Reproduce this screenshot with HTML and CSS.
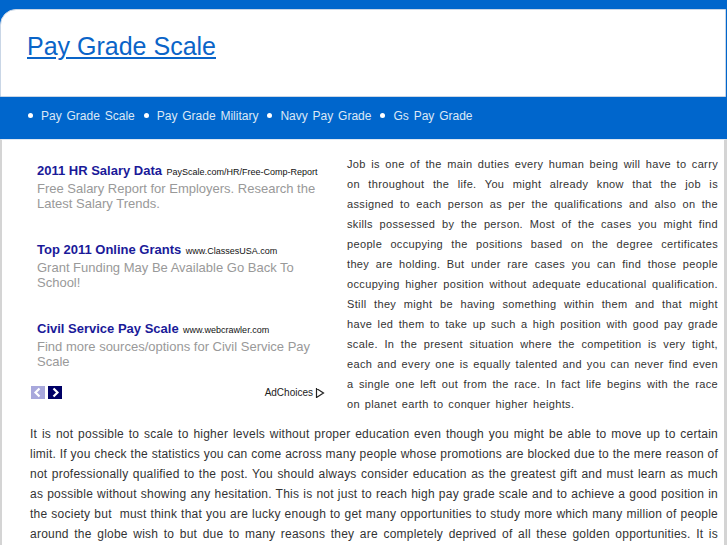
FILE: index.html
```html
<!DOCTYPE html>
<html>
<head>
<meta charset="utf-8">
<title>Pay Grade Scale</title>
<link rel="stylesheet" href="styles.css">
</head>
<body>
<div class="page">
  <div class="header">
    <a class="site-title" href="#">Pay Grade Scale</a>
  </div>
  <div class="nav">
    <a class="nav-item" href="#">Pay Grade Scale</a>
    <a class="nav-item" href="#">Pay Grade Military</a>
    <a class="nav-item" href="#">Navy Pay Grade</a>
    <a class="nav-item" href="#">Gs Pay Grade</a>
  </div>
  <div class="content">
    <div class="top">
      <div class="ads">
        <div class="ad">
          <div class="ad-head"><a class="ad-title" href="#">2011 HR Salary Data</a> <span class="ad-url">PayScale.com/HR/Free-Comp-Report</span></div>
          <div class="ad-desc">Free Salary Report for Employers. Research the Latest Salary Trends.</div>
        </div>
        <div class="ad">
          <div class="ad-head"><a class="ad-title" href="#">Top 2011 Online Grants</a> <span class="ad-url">www.ClassesUSA.com</span></div>
          <div class="ad-desc">Grant Funding May Be Available Go Back To School!</div>
        </div>
        <div class="ad">
          <div class="ad-head"><a class="ad-title" href="#">Civil Service Pay Scale</a> <span class="ad-url">www.webcrawler.com</span></div>
          <div class="ad-desc">Find more sources/options for Civil Service Pay Scale</div>
        </div>
        <div class="ad-foot">
          <div class="arrows">
            <span class="arrow prev"><svg width="14" height="13" viewBox="0 0 14 13"><path d="M8.5 2.5 L4.5 6.5 L8.5 10.5" fill="none" stroke="#fff" stroke-width="2.2"/></svg></span>
            <span class="arrow next"><svg width="14" height="13" viewBox="0 0 14 13"><path d="M5.5 2.5 L9.5 6.5 L5.5 10.5" fill="none" stroke="#fff" stroke-width="2.2"/></svg></span>
          </div>
          <span class="adchoices">AdChoices <svg width="10" height="12" viewBox="0 0 10 12"><path d="M1.5 1 L1.5 11 M1.5 1.5 L8.5 6 L1.5 10.5" fill="none" stroke="#222" stroke-width="1.2"/></svg></span>
        </div>
      </div>
      <p class="intro">Job is one of the main duties every human being will have to carry on throughout the life. You might already know that the job is assigned to each person as per the qualifications and also on the skills possessed by the person. Most of the cases you might find people occupying the positions based on the degree certificates they are holding. But under rare cases you can find those people occupying higher position without adequate educational qualification. Still they might be having something within them and that might have led them to take up such a high position with good pay grade scale. In the present situation where the competition is very tight, each and every one is equally talented and you can never find even a single one left out from the race. In fact life begins with the race on planet earth to conquer higher heights.</p>
    </div>
    <p class="body-text">It is not possible to scale to higher levels without proper education even though you might be able to move up to certain limit. If you check the statistics you can come across many people whose promotions are blocked due to the mere reason of not professionally qualified to the post. You should always consider education as the greatest gift and must learn as much as possible without showing any hesitation. This is not just to reach high pay grade scale and to achieve a good position in the society but &nbsp;must think that you are lucky enough to get many opportunities to study more which many million of people around the globe wish to but due to many reasons they are completely deprived of all these golden opportunities. It is important to remember that education is the key to success and that it opens many doors for you in the future.</p>
  </div>
</div>
</body>
</html>
```

FILE: styles.css
```css
html, body {
  margin: 0;
  padding: 0;
  background: #0066cc;
}
body {
  font-family: "Liberation Sans", Arial, sans-serif;
  overflow: hidden;
}
.page {
  padding-top: 9px;
  background: #0066cc;
}
.header {
  background: #fff;
  height: 86px;
  margin-right: 1px;
  border: 1px solid #c9d6e6;
  border-top-left-radius: 16px;
  padding: 0 0 0 26px;
}
.site-title {
  display: inline-block;
  margin-top: 22px;
  font-size: 25px;
  color: #0a64c8;
  text-decoration: underline;
}
.nav {
  height: 42px;
  display: flex;
  align-items: center;
  padding-left: 28px;
  padding-bottom: 5px;
  box-sizing: border-box;
  gap: 9px;
}
.nav-item {
  font-size: 12px;
  word-spacing: 1.5px;
  color: #dce8f6;
  text-decoration: none;
  display: flex;
  align-items: center;
}
.nav-item::before {
  content: "";
  width: 5px;
  height: 5px;
  border-radius: 50%;
  background: #fff;
  margin-right: 8px;
}
.content {
  background: #fff;
  border-left: 2px solid #d4d4d4;
  border-right: 3px solid #d4d4d4;
  border-top: 1px solid #dfe8f2;
  padding: 0 6px 0 28px;
}
.top {
  display: grid;
  grid-template-columns: 300px 1fr;
  column-gap: 17px;
}
.ads {
  padding: 21px 0 0 7px;
}
.ad {
  height: 79px;
}
.ad-head {
  white-space: nowrap;
  line-height: 17px;
}
.ad-title {
  font-size: 13px;
  font-weight: bold;
  color: #1a1a99;
  text-decoration: none;
}
.ad-url {
  font-size: 9px;
  color: #111;
}
.ad-desc {
  font-size: 13px;
  line-height: 15px;
  color: #999;
}
.ad-foot {
  display: flex;
  justify-content: space-between;
  align-items: center;
  margin-top: -12px;
  margin-left: -6px;
  padding-right: 5px;
}
.arrows {
  display: flex;
  gap: 3px;
}
.arrow {
  width: 14px;
  height: 13px;
  display: block;
}
.arrow svg { display: block; }
.prev { background: #a8a8dc; }
.next { background: #000066; }
.adchoices {
  font-size: 10px;
  color: #222;
  display: flex;
  align-items: center;
  gap: 2px;
}
.intro {
  margin: 14px 0 0;
  font-size: 11px;
  line-height: 20px;
  letter-spacing: 0.35px;
  word-spacing: 1.5px;
  color: #333;
  text-align: justify;
}
.body-text {
  margin: 10px 0 0;
  font-size: 12px;
  line-height: 20px;
  letter-spacing: 0.23px;
  color: #333;
  text-align: justify;
}
```
